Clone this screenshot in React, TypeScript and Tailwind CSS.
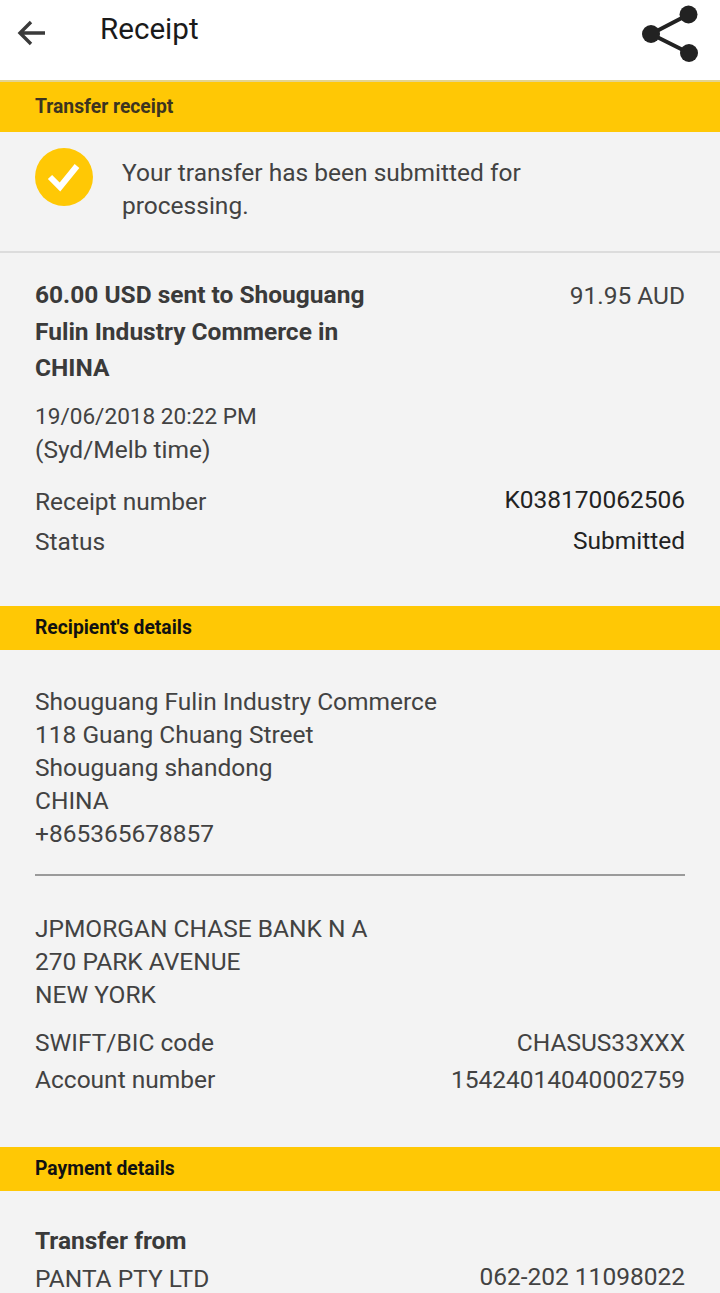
const rowText = 'text-[24.5px] leading-[33px] text-[#424242]';

function SectionBar({ title, dark }: { title: string; dark?: boolean }) {
  return (
    <div className={`bg-[#ffc805] px-[35px] flex items-center text-[19.3px] font-bold ${dark ? 'h-[44px] text-[#111111]' : 'h-[50px] text-[#3c3420]'}`}>
      <span>{title}</span>
    </div>
  );
}

function Row({ label, value, className, valueClass }: { label: string; value: string; className?: string; valueClass?: string }) {
  return (
    <div className={`flex justify-between items-start ${className ?? ''}`}>
      <span className="text-[#424242]">{label}</span>
      <span className={valueClass ?? 'text-[#424242]'}>{value}</span>
    </div>
  );
}

export default function App() {
  return (
    <div className="w-[720px] h-[1293px] overflow-hidden bg-[#f3f3f3] text-[24.5px] font-['Roboto',sans-serif]">
      {/* top bar */}
      <header className="h-[82px] bg-white flex items-start border-b-2 border-[#e3d490]">
        <svg className="ml-[16px] mt-[18px]" width="30" height="30" viewBox="0 0 30 30" fill="none" stroke="#3a3a3a" strokeWidth="3.4">
          <path d="M29 15H4M15 4 4 15l11 11" />
        </svg>
        <h1 className="ml-[54px] mt-[10px] text-[29.6px] leading-[38px] text-[#1a1a1a]">Receipt</h1>
        <svg className="ml-auto mr-[20px] mt-[4px]" width="60" height="60" viewBox="0 0 60 60" fill="#222222" stroke="#222222">
          <path d="M11 30 48.500 10.500M11 30l38 19" strokeWidth="4" fill="none" />
          <circle cx="11" cy="30" r="9" stroke="none" />
          <circle cx="48.500" cy="10.500" r="9" stroke="none" />
          <circle cx="49" cy="49" r="9" stroke="none" />
        </svg>
      </header>

      <SectionBar title="Transfer receipt" />

      {/* submitted message */}
      <div className="h-[121px] border-b-2 border-[#dcdcdc] px-[35px] pt-[16px] flex items-start">
        <div className="w-[58px] h-[58px] rounded-full bg-[#ffc805] flex items-center justify-center shrink-0">
          <svg width="34" height="30" viewBox="0 0 34 30" fill="none" stroke="white" strokeWidth="6">
            <path d="M3 15l10 10L30 4" />
          </svg>
        </div>
        <p className={`ml-[29px] mt-[8px] w-[420px] ${rowText}`}>Your transfer has been submitted for processing.</p>
      </div>

      {/* summary */}
      <section className="px-[35px] pt-[24px] h-[353px]">
        <div className="flex justify-between items-start">
          <p className="w-[345px] font-bold leading-[36.500px] text-[#3a3a3a]">60.00 USD sent to Shouguang Fulin Industry Commerce in CHINA</p>
          <span className="leading-[37px] text-[#424242]">91.95 AUD</span>
        </div>
        <p className={`mt-[12px] ${rowText}`}>
          <span className="text-[22.6px]">19/06/2018 20:22 PM</span><br />(Syd/Melb time)
        </p>
        <Row label="Receipt number" value="K038170062506" className="mt-[19px] leading-[34px]" valueClass="leading-[30px] text-[#222222]" />
        <Row label="Status" value="Submitted" className="mt-[6px] leading-[34px]" valueClass="leading-[32px] text-[#222222]" />
      </section>

      <SectionBar title="Recipient's details" dark />

      {/* recipient */}
      <section className="px-[35px] pt-[35px] h-[497px]">
        <p className={rowText}>
          Shouguang Fulin Industry Commerce<br />
          118 Guang Chuang Street<br />
          Shouguang shandong<br />
          CHINA<br />
          +865365678857
        </p>
        <div className="mt-[24px] border-t-2 border-[#9a9a9a]" />
        <p className={`mt-[36px] ${rowText}`}>
          JPMORGAN CHASE BANK N A<br />
          270 PARK AVENUE<br />
          NEW YORK
        </p>
        <Row label="SWIFT/BIC code" value="CHASUS33XXX" className="mt-[15px] leading-[33px]" />
        <Row label="Account number" value="15424014040002759" className="mt-[4px] leading-[33px]" />
      </section>

      <SectionBar title="Payment details" dark />

      <section className="px-[35px] pt-[32px]">
        <p className="font-bold leading-[36px] text-[#3a3a3a]">Transfer from</p>
        <Row label="PANTA PTY LTD" value="062-202 11098022" className="mt-[3px] leading-[33px]" valueClass="leading-[29px] text-[#424242]" />
      </section>
    </div>
  );
}
